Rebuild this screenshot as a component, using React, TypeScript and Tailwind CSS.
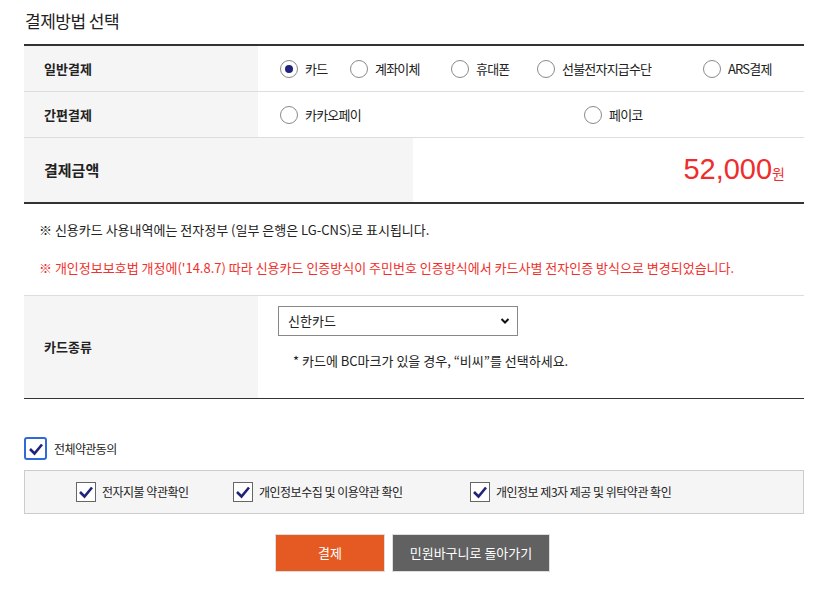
import React from "react";

const font = { fontFamily: '"Noto Sans CJK KR", "Noto Sans", sans-serif' };

function Radio({ checked, label }: { checked?: boolean; label: string }) {
  return (
    <div className="flex items-center gap-[7px]">
      <span className="flex h-[18px] w-[18px] items-center justify-center rounded-full border border-[#8a8a8a] bg-white">
        {checked && <span className="h-[8px] w-[8px] rounded-full bg-[#1f237a]" />}
      </span>
      <span className="text-[13px] tracking-[-0.8px] text-[#222]">{label}</span>
    </div>
  );
}

function Check({ focus }: { focus?: boolean }) {
  return (
    <span
      className={
        focus
          ? "flex h-[23px] w-[23px] items-center justify-center rounded-[3px] border-2 border-[#2f6bd8] bg-white"
          : "flex h-[20px] w-[20px] items-center justify-center border border-[#666] bg-white"
      }
    >
      <svg width="16" height="14" viewBox="0 0 16 14">
        <path d="M2 7 L6.5 11.5 L14 2.5" fill="none" stroke="#1f237a" strokeWidth="2.6" />
      </svg>
    </span>
  );
}

export default function App() {
  return (
    <div className="min-h-[614px] w-[826px] bg-white text-[#222]" style={font}>
      <div className="px-[24px] pr-[22px]">
        <h2 className="pl-[1px] pt-[9px] pb-[11px] text-[17px] leading-[24px] tracking-[-0.5px] text-[#222]">결제방법 선택</h2>

        {/* 결제 수단 */}
        <div className="border-t-2 border-[#333]">
          <div className="grid h-[46px] grid-cols-[234px_1fr] border-b border-[#ddd]">
            <div className="flex items-center bg-[#f5f5f5] pl-[20px] text-[13px] font-bold">일반결제</div>
            <div className="flex items-center pl-[22px]">
              <div className="w-[70px]"><Radio checked label="카드" /></div>
              <div className="w-[101px]"><Radio label="계좌이체" /></div>
              <div className="w-[86px]"><Radio label="휴대폰" /></div>
              <div className="w-[166px]"><Radio label="선불전자지급수단" /></div>
              <Radio label="ARS결제" />
            </div>
          </div>
          <div className="grid h-[46px] grid-cols-[234px_1fr] border-b border-[#ddd]">
            <div className="flex items-center bg-[#f5f5f5] pl-[20px] text-[13px] font-bold">간편결제</div>
            <div className="flex items-center pl-[22px]">
              <div className="w-[304px]"><Radio label="카카오페이" /></div>
              <Radio label="페이코" />
            </div>
          </div>
          <div className="grid h-[66px] grid-cols-[389px_1fr] border-b-2 border-[#333]">
            <div className="flex items-center bg-[#f5f5f5] pl-[20px] text-[15px] font-bold">결제금액</div>
            <div className="flex items-baseline justify-end pr-[19px] pt-[13px] text-[#ee2d2d]">
              <span className="text-[29px] leading-[36px]" style={{ fontFamily: '"Liberation Sans", Arial, sans-serif' }}>52,000</span>
              <span className="text-[14px]">원</span>
            </div>
          </div>
        </div>

        {/* 안내 */}
        <div className="border-b border-[#ddd] pl-[15px] pt-[15px] pb-[16px] text-[13px]">
          <p className="leading-[22px]">※ 신용카드 사용내역에는 전자정부 (일부 은행은 LG-CNS)로 표시됩니다.</p>
          <p className="mt-[16px] leading-[22px] text-[#f0302c]">
            ※ 개인정보보호법 개정에('14.8.7) 따라 신용카드 인증방식이 주민번호 인증방식에서 카드사별 전자인증 방식으로 변경되었습니다.
          </p>
        </div>

        {/* 카드종류 */}
        <div className="grid h-[103px] grid-cols-[234px_1fr] border-b border-[#333]">
          <div className="flex items-center bg-[#f5f5f5] pl-[20px] text-[13px] font-bold">카드종류</div>
          <div className="pl-[20px] pt-[10px]">
            <div className="flex h-[30px] w-[240px] items-center justify-between border border-[#888] pl-[9px] pr-[7px] text-[13px]">
              <span>신한카드</span>
              <svg width="10" height="8" viewBox="0 0 10 8">
                <path d="M1.5 2 L5 5.5 L8.5 2" fill="none" stroke="#111" strokeWidth="2" />
              </svg>
            </div>
            <p className="mt-[15px] pl-[15px] text-[13px]">* 카드에 BC마크가 있을 경우, “비씨”를 선택하세요.</p>
          </div>
        </div>

        {/* 약관 */}
        <div className="mt-[38px] flex items-center gap-[7px]">
          <Check focus />
          <span className="text-[12px] tracking-[-0.6px]">전체약관동의</span>
        </div>
        <div className="mt-[10px] flex h-[44px] items-center border border-[#ccc] bg-[#f5f5f5] pl-[51px] text-[12px] tracking-[-0.5px]">
          <div className="flex w-[157px] items-center gap-[6px]"><Check /><span>전자지불 약관확인</span></div>
          <div className="flex w-[237px] items-center gap-[6px]"><Check /><span>개인정보수집 및 이용약관 확인</span></div>
          <div className="flex items-center gap-[6px]"><Check /><span>개인정보 제3자 제공 및 위탁약관 확인</span></div>
        </div>

        {/* 버튼 */}
        <div className="mt-[20px] flex justify-center gap-[7px] pr-[3px]">
          <button className="h-[38px] w-[110px] border border-[#ddd] bg-[#e55a22] text-[13px] text-white">결제</button>
          <button className="h-[38px] w-[158px] border border-[#ddd] bg-[#616161] text-[13px] text-white">민원바구니로 돌아가기</button>
        </div>
      </div>
    </div>
  );
}
